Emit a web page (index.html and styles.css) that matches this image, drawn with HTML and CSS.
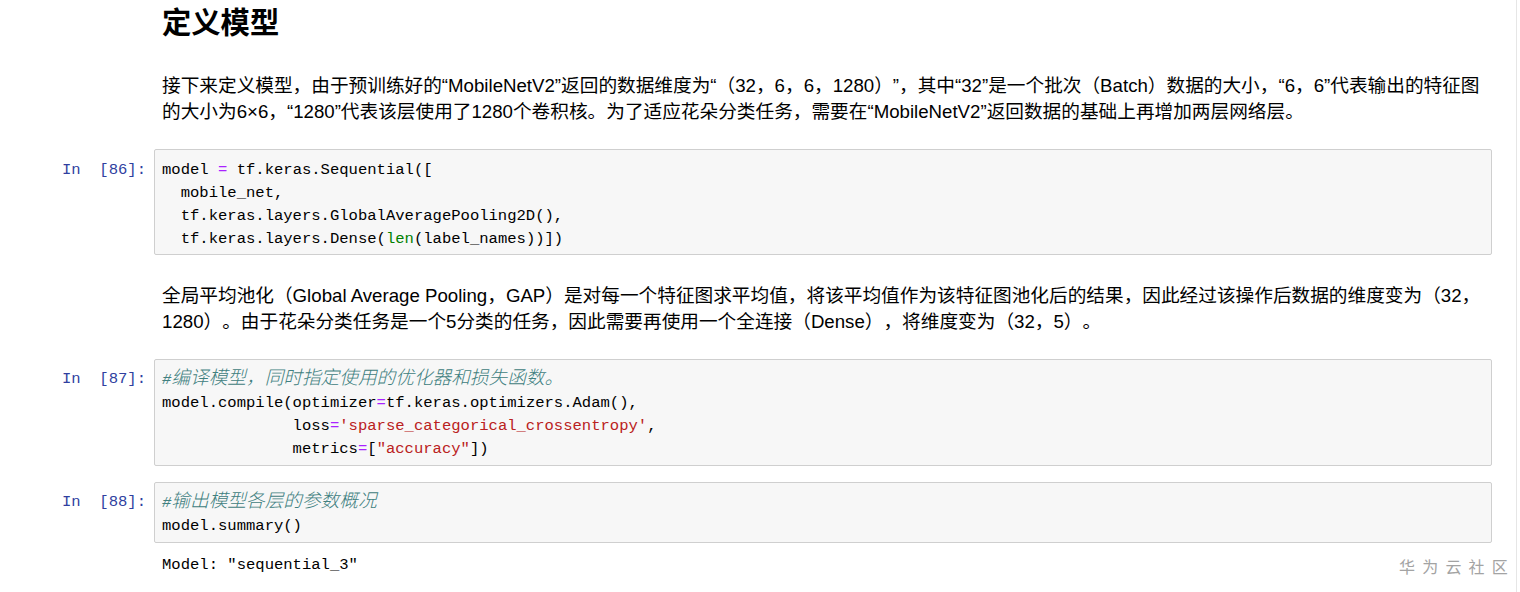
FILE: index.html
```html
<!DOCTYPE html>
<html lang="zh-CN">
<head>
<meta charset="utf-8">
<title>定义模型</title>
<link rel="stylesheet" href="styles.css">
</head>
<body>
<div class="notebook">
  <div class="cell">
    <div class="prompt"></div>
    <div class="md">
      <h2 class="title">定义模型</h2>
      <p class="para first">接下来定义模型，由于预训练好的“MobileNetV2”返回的数据维度为“（32，6，6，1280）”，其中“32”是一个批次（Batch）数据的大小，“6，6”代表输出的特征图的大小为6×6，“1280”代表该层使用了1280个卷积核。为了适应花朵分类任务，需要在“MobileNetV2”返回数据的基础上再增加两层网络层。</p>
    </div>
  </div>

  <div class="cell code c1">
    <div class="prompt">In&nbsp;&nbsp;[86]:</div>
    <pre class="input">model <span class="o">=</span> tf.keras.Sequential([
  mobile_net,
  tf.keras.layers.GlobalAveragePooling2D(),
  tf.keras.layers.Dense(<span class="nb">len</span>(label_names))])</pre>
  </div>

  <div class="cell md-cell">
    <div class="prompt"></div>
    <div class="md">
      <p class="para">全局平均池化（Global Average Pooling，GAP）是对每一个特征图求平均值，将该平均值作为该特征图池化后的结果，因此经过该操作后数据的维度变为（32，1280）。由于花朵分类任务是一个5分类的任务，因此需要再使用一个全连接（Dense），将维度变为（32，5）。</p>
    </div>
  </div>

  <div class="cell code c2">
    <div class="prompt">In&nbsp;&nbsp;[87]:</div>
    <pre class="input"><span class="c">#<span class="cjk">编译模型，同时指定使用的优化器和损失函数。</span></span>
model.compile(optimizer<span class="o">=</span>tf.keras.optimizers.Adam(),
              loss<span class="o">=</span><span class="s">'sparse_categorical_crossentropy'</span>,
              metrics<span class="o">=</span>[<span class="s">"accuracy"</span>])</pre>
  </div>

  <div class="cell code c3">
    <div class="prompt">In&nbsp;&nbsp;[88]:</div>
    <pre class="input"><span class="c">#<span class="cjk">输出模型各层的参数概况</span></span>
model.summary()</pre>
  </div>

  <div class="cell output">
    <div class="prompt"></div>
    <pre class="out">Model: "sequential_3"</pre>
  </div>
</div>
<div class="watermark">华为云社区</div>
</body>
</html>
```

FILE: styles.css
```css
html, body {
  margin: 0;
  padding: 0;
  background: #ffffff;
}

body {
  position: relative;
  width: 1520px;
  height: 592px;
  overflow: hidden;
  font-family: "Liberation Sans", "Noto Sans CJK SC", sans-serif;
  color: #000;
  text-spacing-trim: space-all;
}

.notebook {
  box-sizing: border-box;
  width: 1517px;
  height: 592px;
  padding-right: 24px;
  border-right: 1px solid #e6e6e6;
}

.cell {
  display: flex;
  align-items: flex-start;
}

.prompt {
  flex: 0 0 154px;
  box-sizing: border-box;
  padding-right: 8px;
  padding-top: 9.5px;
  text-align: right;
  font-family: "Liberation Mono", "Noto Sans CJK SC", monospace;
  font-size: 15.56px;
  line-height: 23px;
  color: #303f9f;
  white-space: nowrap;
}

.md {
  flex: 1;
  min-width: 0;
  padding-left: 8px;
}

.title {
  margin: 0;
  padding-top: 5px;
  font-size: 29.3px;
  line-height: 35px;
  font-weight: bold;
}

.para {
  margin: 0;
  font-size: 18.67px;
  line-height: 26px;
  text-spacing-trim: space-all;
}

.para.first {
  margin-top: 32.5px;
}

.cell.code .input {
  flex: 1;
  min-width: 0;
  margin: 0;
  box-sizing: border-box;
  background: #f7f7f7;
  border: 1px solid #cfcfcf;
  border-radius: 2px;
  padding: 8.5px 7px 3.5px;
  font-family: "Liberation Mono", "Noto Sans CJK SC", monospace;
  font-size: 15.56px;
  line-height: 23px;
  color: #000;
  white-space: pre;
}

.c1 { margin-top: 24.5px; }
.md-cell { margin-top: 27.6px; }
.c2 { margin-top: 24.4px; }
.c3 { margin-top: 16px; }

.output { margin-top: 11px; }

.output .prompt { padding-top: 0; }

.out {
  margin: 0;
  padding-left: 8px;
  font-family: "Liberation Mono", "Noto Sans CJK SC", monospace;
  font-size: 15.56px;
  line-height: 23px;
  color: #000;
}

.o { color: #aa22ff; }
.nb { color: #008000; }
.s { color: #ba2121; }
.c { color: #408080; font-style: italic; }

.cjk {
  font-family: "Noto Sans CJK SC", sans-serif;
  font-size: 18.67px;
  font-weight: 300;
  line-height: 16px;
}

.watermark {
  position: absolute;
  left: 1399px;
  top: 555px;
  font-family: "Noto Sans CJK SC", sans-serif;
  font-size: 16px;
  line-height: 22px;
  letter-spacing: 7.2px;
  color: #a3a3a3;
  white-space: nowrap;
}
```
